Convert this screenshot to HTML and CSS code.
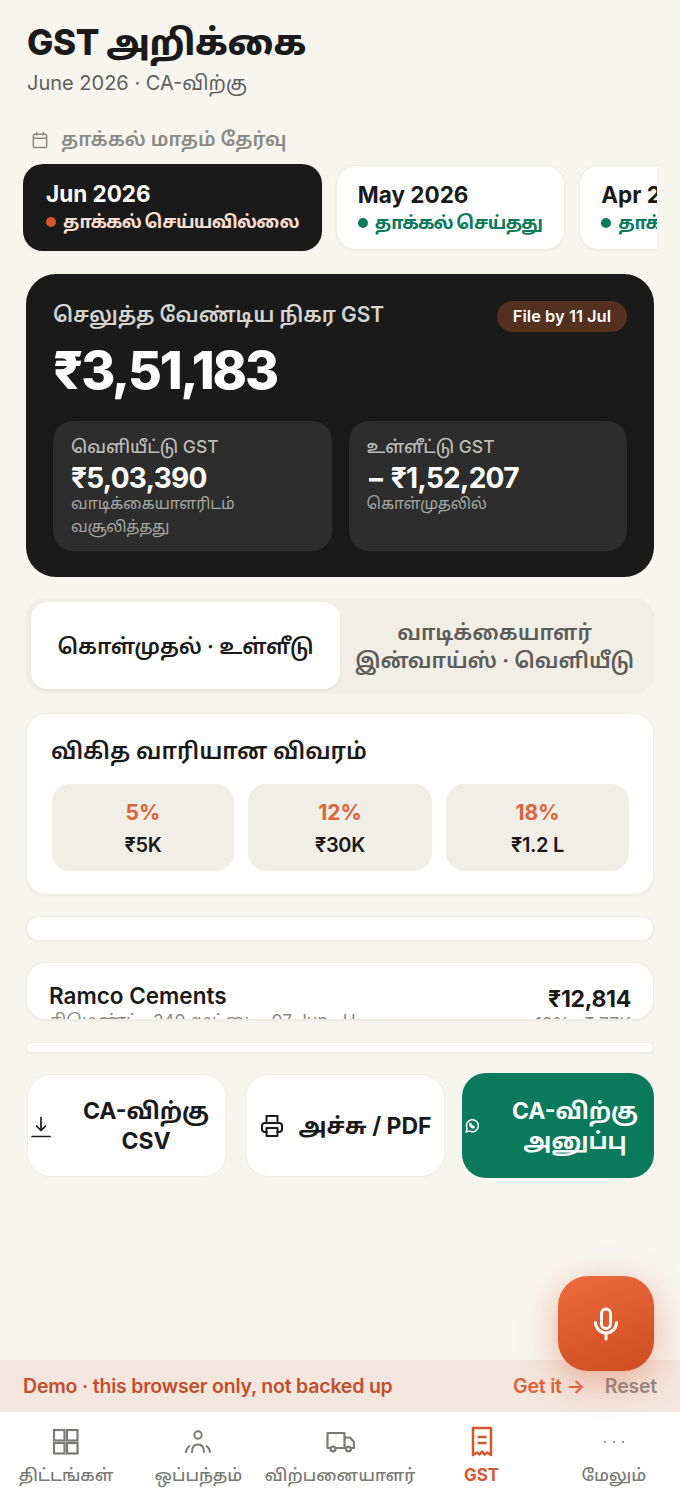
FILE: index.html
```html
<!DOCTYPE html>
<html lang="ta">

<head>
    <meta charset="UTF-8">
    <meta name="viewport" content="width=device-width, initial-scale=1.0">
    <title>GST அறிக்கை</title>
    <link rel="stylesheet" href="styles.css">
</head>

<body>
    <div class="app">
        <main class="content">
            <header class="page-head">
                <h1>GST அறிக்கை</h1>
                <p>June 2026 · CA-விற்கு</p>
            </header>

            <div class="month-label">
                <svg width="20" height="20" viewBox="0 0 24 24" fill="none" stroke="currentColor" stroke-width="1.8"><rect x="4" y="5" width="16" height="16" rx="1.5"/><path d="M4 10h16M8 2.5v4M16 2.5v4"/></svg>
                <span>தாக்கல் மாதம் தேர்வு</span>
            </div>

            <div class="months">
                <div class="month month-active">
                    <b>Jun 2026</b>
                    <span class="status"><i class="dot"></i>தாக்கல் செய்யவில்லை</span>
                </div>
                <div class="month">
                    <b>May 2026</b>
                    <span class="status"><i class="dot"></i>தாக்கல் செய்தது</span>
                </div>
                <div class="month">
                    <b>Apr 2026</b>
                    <span class="status"><i class="dot"></i>தாக்கல் செய்தது</span>
                </div>
            </div>

            <section class="hero">
                <div class="hero-top">
                    <span class="hero-title">செலுத்த வேண்டிய நிகர GST</span>
                    <span class="due">File by 11 Jul</span>
                </div>
                <div class="hero-amount">₹3,51,183</div>
                <div class="hero-grid">
                    <div class="hero-box">
                        <div class="box-label">வெளியீட்டு GST</div>
                        <div class="box-amount">₹5,03,390</div>
                        <div class="box-note">வாடிக்கையாளரிடம் வசூலித்தது</div>
                    </div>
                    <div class="hero-box">
                        <div class="box-label">உள்ளீட்டு GST</div>
                        <div class="box-amount">− ₹1,52,207</div>
                        <div class="box-note">கொள்முதலில்</div>
                    </div>
                </div>
            </section>

            <div class="tabs">
                <div class="tab tab-active">கொள்முதல் · உள்ளீடு</div>
                <div class="tab">வாடிக்கையாளர் இன்வாய்ஸ் · வெளியீடு</div>
            </div>

            <section class="card rates">
                <h2>விகித வாரியான விவரம்</h2>
                <div class="rate-grid">
                    <div class="rate"><b>5%</b><span>₹5K</span></div>
                    <div class="rate"><b>12%</b><span>₹30K</span></div>
                    <div class="rate"><b>18%</b><span>₹1.2 L</span></div>
                </div>
            </section>

            <div class="card squished squished-a"></div>

            <div class="card squished squished-b">
                <div class="row">
                    <div>
                        <div class="row-name">Ramco Cements</div>
                        <div class="row-sub">சிமெண்ட் · 240 மூட்டை · 07 Jun · H</div>
                    </div>
                    <div class="row-right">
                        <div class="row-amount">₹12,814</div>
                        <div class="row-sub">18% · ₹ 77K</div>
                    </div>
                </div>
            </div>

            <div class="card squished squished-c"></div>

            <div class="actions">
                <button class="action">
                    <svg width="20" height="24" viewBox="0 0 20 24" fill="none" stroke="currentColor" stroke-width="1.7" stroke-linecap="round" stroke-linejoin="round"><path d="M10 3.5v13M5.5 12l4.5 4.500 4.500-4.500M1 22.500h18"/></svg>
                    <span>CA-விற்கு CSV</span>
                </button>
                <button class="action action-print">
                    <svg width="24" height="24" viewBox="0 0 24 24" fill="none" stroke="currentColor" stroke-width="2" stroke-linecap="round" stroke-linejoin="round"><path d="M6.500 9V2h11v7"/><path d="M6.500 18H5a3 3 0 0 1-3-3v-3a3 3 0 0 1 3-3h14a3 3 0 0 1 3 3v3a3 3 0 0 1-3 3h-1.500"/><rect x="6.500" y="14" width="11" height="8"/></svg>
                    <span>அச்சு / PDF</span>
                </button>
                <button class="action action-send">
                    <svg width="16" height="16" viewBox="0 0 24 24" fill="none" stroke="currentColor" stroke-width="2.200" stroke-linecap="round" stroke-linejoin="round"><path d="M3 21l1.700-5A9 9 0 1 1 8 19.400z"/><path d="M9 8.500c-.8.8-.5 2.500 1.200 4.300s3.500 2.300 4.500 1.400l.5-1-2-1.200-.8.700c-.8-.3-1.800-1.300-2.100-2.100l.7-.8L9.800 8z"/></svg>
                    <span>CA-விற்கு அனுப்பு</span>
                </button>
            </div>
        </main>

        <button class="fab" aria-label="mic">
            <svg width="36" height="36" viewBox="0 0 24 24" fill="none" stroke="currentColor" stroke-width="2" stroke-linecap="round" stroke-linejoin="round"><rect x="9" y="2" width="6" height="13" rx="3"/><path d="M5 11a7 7 0 0 0 14 0M12 18v4"/></svg>
        </button>

        <div class="demo">
            <span class="demo-text">Demo · this browser only, not backed up</span>
            <span class="demo-get">Get it →</span>
            <span class="demo-reset">Reset</span>
        </div>

        <nav class="tabbar">
            <a href="#">
                <svg width="28" height="28" viewBox="0 0 28 28" fill="none" stroke="currentColor" stroke-width="2.200"><rect x="2" y="2" width="10.500" height="10.500"/><rect x="15" y="2" width="10.500" height="10.500"/><rect x="2" y="15" width="10.500" height="10.500"/><rect x="15" y="15" width="10.500" height="10.500"/></svg>
                <span>திட்டங்கள்</span>
            </a>
            <a href="#">
                <svg width="28" height="28" viewBox="0 0 28 28" fill="none" stroke="currentColor" stroke-width="2" stroke-linecap="round"><circle cx="14" cy="7" r="3.700"/><path d="M8 24c0-5 2.500-7.500 6-7.500s6 2.500 6 7.500M2 24c.3-2.500 1.300-4.500 3.500-6M26 24c-.3-2.500-1.300-4.500-3.500-6"/></svg>
                <span>ஒப்பந்தம்</span>
            </a>
            <a href="#">
                <svg width="30" height="28" viewBox="0 0 30 28" fill="none" stroke="currentColor" stroke-width="2.200" stroke-linejoin="round"><path d="M2.500 20V5h17v15z"/><path d="M19.500 9.500H25l4 4.500v6H19.500"/><circle cx="8" cy="21" r="2.400" fill="#fff"/><circle cx="23.500" cy="21" r="2.400" fill="#fff"/></svg>
                <span>விற்பனையாளர்</span>
            </a>
            <a href="#" class="tab-on">
                <svg width="24" height="32" viewBox="0 0 24 32" fill="none" stroke="currentColor" stroke-width="2.500" stroke-linejoin="round"><path d="M3 2h18v27l-4-2.500-2.500 2-2.500-3-2.500 3-2.500-2-4 2.500z"/><path d="M7.500 11h9M7.500 17h9"/></svg>
                <span>GST</span>
            </a>
            <a href="#">
                <svg width="28" height="28" viewBox="0 0 28 28" fill="currentColor"><circle cx="5" cy="14" r="1"/><circle cx="14" cy="14" r="1"/><circle cx="23" cy="14" r="1"/></svg>
                <span>மேலும்</span>
            </a>
        </nav>
    </div>
</body>

</html>
```

FILE: styles.css
```css
* {
    box-sizing: border-box;
}

body {
    margin: 0;
    font-family: Inter, "Noto Sans Tamil", "Noto Sans", sans-serif;
    background-color: #f7f5f0;
    color: #1a1a1a;
}

.app {
    position: relative;
    width: 680px;
    height: 1510px;
    display: flex;
    flex-direction: column;
    overflow: hidden;
}

.content {
    flex: 1;
    min-height: 0;
    padding: 19px 26px 0;
}

.page-head h1 {
    margin: 0 0 0 1px;
    font-size: 35px;
    line-height: 46px;
    font-weight: 800;
    letter-spacing: -0.4px;
}

.page-head p {
    margin: 3px 0 0 1px;
    font-size: 20px;
    line-height: 30px;
    color: #5e5e5e;
}

.month-label {
    display: flex;
    align-items: center;
    gap: 11px;
    margin: 30px 0 0 4px;
    height: 24px;
    font-size: 19.5px;
    font-weight: 600;
    color: #8a8a85;
}

.months {
    display: flex;
    gap: 14px;
    margin: 12px -3px 0;
    overflow: hidden;
    align-items: center;
    padding: 0 0 2px;
}

.month {
    flex: none;
    background: #fff;
    border: 1px solid #efebe3;
    border-radius: 20px;
    padding: 14px 22px 13px 21px;
    height: 85px;
    box-shadow: 0 1px 3px rgba(0, 0, 0, 0.05);
}

.month b {
    display: block;
    font-size: 22.5px;
    line-height: 30px;
    font-weight: 700;
}

.month-active {
    background: #1a1a1a;
    border: 0;
    height: 87px;
    padding: 15px 23px;
    color: #fff;
}

.status {
    display: flex;
    align-items: center;
    gap: 7px;
    font-size: 18px;
    line-height: 26px;
    font-weight: 700;
    letter-spacing: -0.8px;
    color: #0b7a5b;
}

.month-active .status {
    color: #f7dccf;
}

.dot {
    width: 10px;
    height: 10px;
    border-radius: 50%;
    background: #0b7a5b;
}

.month-active .dot {
    background: #d4582f;
}

.hero {
    margin-top: 21px;
    height: 303px;
    padding: 26px 27px;
    border-radius: 30px;
    background: #1a1a1a;
    color: #fff;
}

.hero-top {
    display: flex;
    justify-content: space-between;
    align-items: center;
    height: 32px;
}

.hero-title {
    font-size: 21px;
    font-weight: 600;
    letter-spacing: -0.1px;
    color: #d4d4d0;
}

.due {
    padding: 0 16px;
    height: 31px;
    line-height: 31px;
    border-radius: 16px;
    font-size: 16.5px;
    font-weight: 600;
    background: #54301f;
}

.hero-amount {
    margin-top: 7px;
    font-size: 52px;
    line-height: 64px;
    font-weight: 800;
    letter-spacing: -2.2px;
}

.hero-grid {
    display: grid;
    grid-template-columns: 1fr 1fr;
    gap: 17px;
    margin-top: 18px;
}

.hero-box {
    height: 130px;
    padding: 14px 18px;
    border-radius: 20px;
    background: #2d2d2d;
}

.box-label {
    font-size: 17.5px;
    line-height: 24px;
    font-weight: 500;
    color: #bcbcb8;
}

.box-amount {
    margin-top: 3px;
    font-size: 28px;
    line-height: 32px;
    font-weight: 700;
    letter-spacing: -0.7px;
}

.box-note {
    margin-top: -2px;
    font-size: 16px;
    line-height: 23px;
    letter-spacing: -0.3px;
    color: #a5a5a1;
}

.tabs {
    display: flex;
    margin-top: 21px;
    height: 95px;
    padding: 4px 5px;
    border-radius: 20px;
    background: #f1eee7;
    box-shadow: 0 1px 3px rgba(0, 0, 0, 0.03);
}

.tab {
    flex: 1;
    display: flex;
    align-items: center;
    justify-content: center;
    text-align: center;
    padding: 0 8px;
    font-size: 21.5px;
    line-height: 28px;
    font-weight: 600;
    letter-spacing: -0.1px;
    color: #5c5c58;
}

.tab-active {
    flex: none;
    width: 309px;
    background: #fff;
    border-radius: 16px;
    color: #1a1a1a;
    box-shadow: 0 1px 3px rgba(0, 0, 0, 0.08);
}

.card {
    background: #fff;
    border: 1px solid #efebe3;
    border-radius: 20px;
    box-shadow: 0 1px 3px rgba(0, 0, 0, 0.05);
}

.rates {
    margin-top: 20px;
    height: 182px;
    padding: 19px 24px;
}

.rates h2 {
    margin: 0;
    height: 36px;
    font-size: 23px;
    line-height: 36px;
    font-weight: 600;
}

.rate-grid {
    display: grid;
    grid-template-columns: 182px 184px 183px;
    gap: 14px;
    margin: 15px 0 0 1px;
}

.rate {
    height: 87px;
    padding-top: 14px;
    border-radius: 18px;
    background: #f1eee7;
    text-align: center;
}

.rate b {
    display: block;
    font-size: 21px;
    line-height: 30px;
    font-weight: 700;
    color: #e0613a;
}

.rate span {
    display: block;
    margin-top: 2px;
    font-size: 20px;
    line-height: 30px;
    font-weight: 600;
    letter-spacing: -0.3px;
}

.squished {
    overflow: hidden;
}

.squished-a {
    margin-top: 21px;
    height: 25px;
}

.squished-b {
    margin-top: 21px;
    height: 58px;
}

.squished-c {
    margin-top: 22px;
    height: 11px;
    border-radius: 5px;
}

.row {
    display: flex;
    justify-content: space-between;
    padding: 19px 22px 0;
}

.row-name {
    font-size: 22.5px;
    line-height: 28px;
    font-weight: 600;
}

.row-sub {
    font-size: 17.5px;
    line-height: 22px;
    color: #8a8a85;
}

.row-right {
    text-align: right;
    margin-top: 3px;
}

.row-amount {
    font-size: 23px;
    line-height: 28px;
    font-weight: 700;
    letter-spacing: -0.3px;
}

.actions {
    display: flex;
    gap: 17.5px;
    margin-top: 20px;
    padding-left: 1px;
    height: 105px;
}

.action {
    flex: none;
    width: 200px;
    margin: 1px 0;
    display: flex;
    align-items: center;
    gap: 18px;
    padding: 0 3px;
    background: #fff;
    border: 1px solid #efebe3;
    border-radius: 24px;
    font-family: inherit;
    font-size: 23px;
    line-height: 30px;
    font-weight: 700;
    color: #1a1a1a;
    text-align: center;
}

.action svg {
    flex: none;
}

.action-print {
    padding: 0 6px 0 14px;
    gap: 15px;
    white-space: nowrap;
}

.action-send {
    width: 192px;
    margin: 0;
    padding: 0 2px;
    background: #0b7a5b;
    border: 0;
    color: #fff;
}

.fab {
    position: absolute;
    left: 558px;
    top: 1276px;
    z-index: 2;
    width: 96px;
    height: 95px;
    display: flex;
    align-items: center;
    justify-content: center;
    border: 0;
    border-radius: 30px;
    color: #fff;
    background: linear-gradient(160deg, #ec6a3c, #cf4c1f);
    box-shadow: 0 10px 36px rgba(224, 90, 45, 0.42);
}

.demo {
    flex: none;
    height: 51px;
    display: flex;
    align-items: center;
    padding: 0 23px;
    background: #f3e6de;
    font-size: 19.5px;
    font-weight: 600;
    letter-spacing: -0.2px;
}

.demo-text {
    flex: 1;
    color: #c24f2c;
}

.demo-get {
    color: #e0613a;
}

.demo-reset {
    margin-left: 20px;
    color: #8f8a85;
}

.tabbar {
    flex: none;
    height: 99px;
    display: flex;
    position: relative;
    background: #fff;
    border-top: 1px solid #efe8df;
    padding-top: 14px;
}

.tabbar a {
    flex: 1;
    display: flex;
    flex-direction: column;
    align-items: center;
    text-decoration: none;
    color: #7a7a76;
    font-size: 17px;
    font-weight: 500;
}

.tabbar svg {
    height: 32px;
}

.tabbar span {
    margin-top: 4px;
    line-height: 26px;
}

.tabbar .tab-on {
    color: #d4582f;
    font-weight: 700;
}
```
